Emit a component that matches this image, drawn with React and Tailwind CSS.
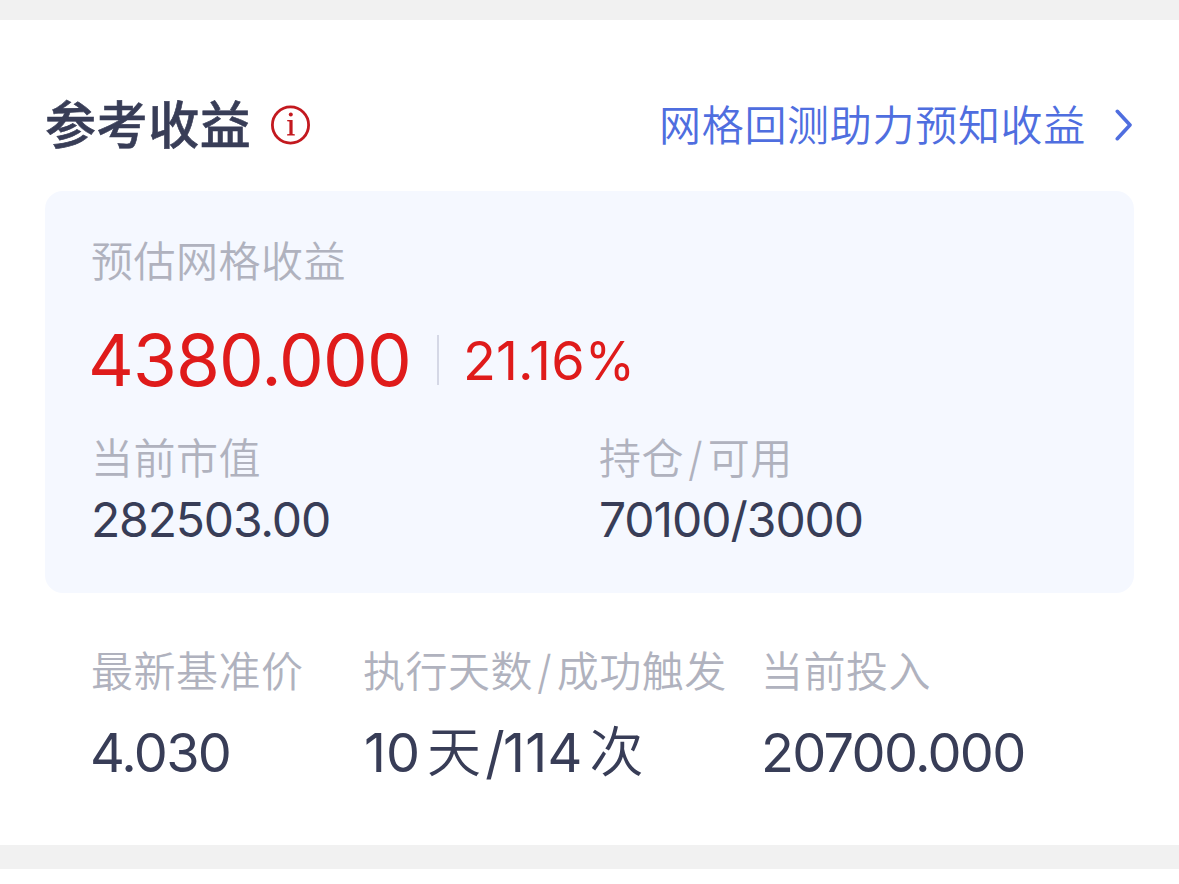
function Label({ children }) {
  return (
    <div className="text-[42px] leading-[60px] font-[350] tracking-[0.5px] whitespace-nowrap text-[#b0b2be]">{children}</div>
  );
}

function Slash() {
  return <span className="mr-[5px] ml-[4px] inline-block origin-center scale-y-110 tracking-normal">/</span>;
}

function Stat({ label, children }) {
  return (
    <div>
      <Label>{label}</Label>
      <div className="mt-[11px] text-[54px] leading-[80px] tracking-[-1.7px] whitespace-nowrap">{children}</div>
    </div>
  );
}

export default function App() {
  return (
    <div className="h-[884px] w-[1179px] overflow-hidden bg-white font-['Inter','Noto_Sans_CJK_SC',sans-serif] text-[#383d57]">
      <div className="h-5 bg-[#f1f1f1]" />
      <main className="h-[825px] bg-white px-[45px] pt-[70px]">
        <header className="flex h-[70px] items-center">
          <h1 className="mt-[2px] w-[206px] text-[51px] leading-[70px] font-medium tracking-[0.6px] whitespace-nowrap [-webkit-text-stroke:0.6px_#383d57]">参考收益</h1>
          <svg className="ml-[19px] size-[41px]" viewBox="0 0 41 41" fill="none">
            <circle cx="20.5" cy="20" r="18.1" stroke="#c3191f" strokeWidth="2.8" />
            <circle cx="20.8" cy="9.4" r="2" fill="#c3191f" />
            <path d="M17.2 14.9H22.6V29L24.8 29.2V30.6H17.1V29.2L19.4 29V16.6L17.2 16.3Z" fill="#c3191f" />
          </svg>
          <a className="mt-[2px] ml-auto text-[42px] leading-[60px] font-[350] tracking-[0.7px] whitespace-nowrap text-[#4f6edf]">网格回测助力预知收益</a>
          <svg className="mr-px ml-[29px] h-8 w-[18px]" viewBox="0 0 18 32" fill="none">
            <path d="M2.3 2.3L15 16L2.3 29.7" stroke="#4f6edf" strokeWidth="3.6" strokeLinecap="round" strokeLinejoin="round" />
          </svg>
        </header>
        <section className="mt-[31px] h-[402px] rounded-[18px] bg-[#f5f8ff] px-[46px] pt-[41px]">
          <Label>预估网格收益</Label>
          <div className="mt-[19px] flex h-[98px] items-center text-[#df1b1b]">
            <span className="-ml-[3px] w-[323px] text-[71px] tracking-[-0.85px]">4380.000</span>
            <i className="ml-[26px] h-[50px] w-[2px] bg-[#d5d8e6]" />
            <span className="ml-[24px] flex text-[54px] tracking-[0.1px]">
              21.16<span className="inline-block origin-left scale-x-[0.94]">%</span>
            </span>
          </div>
          <div className="mt-[20px] grid grid-cols-[508px_1fr]">
            <div>
              <Label>当前市值</Label>
              <div className="text-[48px] leading-[62px] tracking-[-1.15px]">282503.00</div>
            </div>
            <div>
              <Label>持仓<Slash />可用</Label>
              <div className="text-[48px] leading-[62px] tracking-[-1.05px]">70100/3000</div>
            </div>
          </div>
        </section>
        <section className="mt-[49px] grid grid-cols-[272px_398px_1fr] px-[46px]">
          <Stat label="最新基准价"><span className="-ml-px">4.030</span></Stat>
          <Stat label={<>执行天数<Slash />成功触发</>}>
            <span className="ml-px tracking-normal">10</span>
            <span className="ml-[7px] font-[350]">天</span>
            <span className="ml-[6px] inline-block scale-y-105">/</span>
            <span className="tracking-[0.2px]">114</span>
            <span className="ml-[7px] font-[350]">次</span>
          </Stat>
          <Stat label="当前投入">20700.000</Stat>
        </section>
      </main>
      <div className="h-6 bg-[#f1f1f1]" />
    </div>
  );
}
